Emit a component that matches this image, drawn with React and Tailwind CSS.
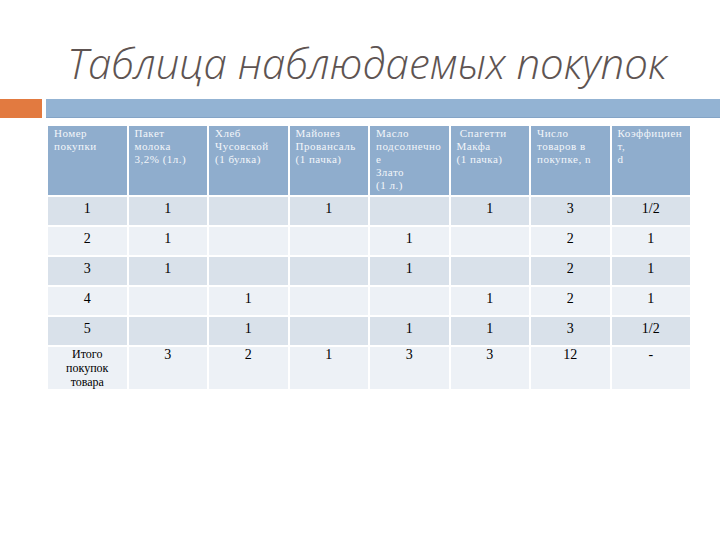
const headers = [
  ["Номер", "покупки"],
  ["Пакет", "молока", "3,2%  (1л.)"],
  ["Хлеб", "Чусовской", "(1 булка)"],
  ["Майонез", "Провансаль", "(1 пачка)"],
  ["Масло", "подсолнечно", "е", "Злато", "(1 л.)"],
  ["\u00a0Спагетти", "Макфа", "(1 пачка)"],
  ["Число", "товаров в", "покупке, n"],
  ["Коэффициен", "т,", "d"],
];

const rows = [
  ["1", "1", "", "1", "", "1", "3", "1/2"],
  ["2", "1", "", "", "1", "", "2", "1"],
  ["3", "1", "", "", "1", "", "2", "1"],
  ["4", "", "1", "", "", "1", "2", "1"],
  ["5", "", "1", "", "1", "1", "3", "1/2"],
];

const total = ["", "3", "2", "1", "3", "3", "12", "-"];

export default function App() {
  return (
    <div className="w-[720px] h-[540px] bg-white overflow-hidden">
      <h1
        className="pt-[37px] pl-[14px] h-[99px] text-center text-[42px] leading-[52px] italic font-light text-[#5e5452]"
        style={{ fontFamily: '"Open Sans", sans-serif' }}
      >
        Таблица наблюдаемых покупок
      </h1>

      <div className="flex h-[19px] gap-[4px]">
        <div className="w-[42px] bg-[#e27a40]" />
        <div className="flex-1 bg-[#93b3d3] border-b border-[#84a4c6]" />
      </div>

      <div
        className="ml-[48px] mt-[8px] w-[642px] grid grid-cols-8 gap-[2px]"
        style={{ fontFamily: '"Liberation Serif", serif' }}
      >
        {headers.map((lines, i) => (
          <div
            key={"h" + i}
            className="h-[69px] bg-[#8fadcd] pl-[6px] pt-[1px] text-[11px] leading-[13px] tracking-[0.5px] text-[#f3f6fa] whitespace-nowrap overflow-visible"
          >
            {lines.map((l, j) => (
              <div key={j}>{l}</div>
            ))}
          </div>
        ))}

        {rows.map((r, ri) =>
          r.map((v, ci) => (
            <div
              key={ri + "-" + ci}
              className={
                "h-[28px] pt-[4px] text-center text-[14px] leading-[16px] text-black " +
                (ri % 2 === 0 ? "bg-[#d9e1ea]" : "bg-[#edf1f6]")
              }
            >
              {v}
            </div>
          ))
        )}

        {total.map((v, ci) => (
          <div
            key={"t" + ci}
            className="h-[42px] text-center text-[14px] leading-[16px] text-black bg-[#edf1f6]"
          >
            {ci === 0 ? (
              <div className="text-[12px] leading-[14px]">
                <div>Итого</div>
                <div>покупок</div>
                <div>товара</div>
              </div>
            ) : (
              v
            )}
          </div>
        ))}
      </div>
    </div>
  );
}
